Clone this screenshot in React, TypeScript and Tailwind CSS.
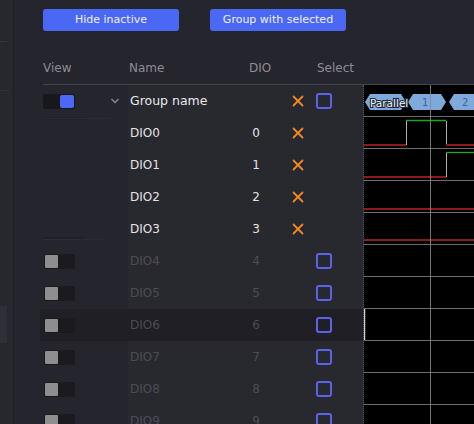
import React from "react";

type Row = { name: string; n: number; active: boolean };

const rows: Row[] = Array.from({ length: 10 }, (_, i) => ({
  name: `DIO${i}`,
  n: i,
  active: i < 4,
}));

function XIcon() {
  return (
    <svg width="12" height="12" viewBox="0 0 12 12" className="block">
      <path d="M1.5 1.5 L10.5 10.5 M10.5 1.5 L1.5 10.5" stroke="#f08a24" strokeWidth="1.8" strokeLinecap="round" />
    </svg>
  );
}

function Checkbox() {
  return <div className="h-[16px] w-[16px] shrink-0 rounded-[3px] border-2 border-[#5a63e6]" />;
}

function ToggleOn() {
  return (
    <div className="flex h-[15px] w-[32px] shrink-0 items-center justify-end rounded-[2px] bg-[#18181c] pr-[1px]">
      <div className="h-[13px] w-[14px] rounded-[2px] bg-[#4d68f6]" />
    </div>
  );
}

function ToggleOff() {
  return (
    <div className="flex h-[15px] w-[31px] shrink-0 items-center rounded-[2px] bg-[#1b1b1f]">
      <div className="h-[15px] w-[15px] shrink-0 rounded-[2px] border border-[#1a1a1e] bg-[#8e8e8e]" />
    </div>
  );
}

function Chevron() {
  return (
    <svg width="10" height="8" viewBox="0 0 10 8" className="block">
      <path d="M1.5 2 L5 5.5 L8.5 2" stroke="#8a8a92" strokeWidth="1.4" fill="none" />
    </svg>
  );
}

function GroupRow() {
  return (
    <div className="flex h-[32px] shrink-0 items-center">
      <div className="relative flex h-full w-[88px] items-center pl-[3px]">
        <ToggleOn />
        <div className="ml-[35px]">
          <Chevron />
        </div>
        <div className="absolute left-[3px] top-[32px] h-[3px] w-[44px] bg-[#202027]" />
        <div className="absolute left-[3px] top-[33px] h-px w-[68px] bg-[#2b2b33]" />
      </div>
      <div className="flex h-full flex-1 items-center bg-[#28282f]">
        <div className="w-[146px] pl-[2px] text-[12.5px] text-[#e8e8ea]">Group name</div>
        <div className="w-[42px] pl-[18px]">
          <XIcon />
        </div>
        <Checkbox />
      </div>
    </div>
  );
}

function DioRow({ r, highlight }: { r: Row; highlight: boolean }) {
  const color = r.active ? "text-[#e4e4e6]" : "text-[#4c4c56]";
  return (
    <div className={`flex h-[32px] shrink-0 items-center ${highlight ? "bg-[#1f1f25]" : ""}`}>
      <div className="relative flex h-full w-[88px] items-center pl-[4px]">
        {!r.active && <ToggleOff />}
        {r.n === 3 && (
          <>
            <div className="absolute left-[3px] top-[24px] h-[3px] w-[40px] bg-[#202027]" />
            <div className="absolute left-[3px] top-[26px] h-px w-[60px] bg-[#2b2b33]" />
          </>
        )}
      </div>
      <div className={`flex h-full flex-1 items-center ${highlight ? "bg-[#1f1f25]" : "bg-[#28282f]"}`}>
        <div className={`w-[110px] pl-[2px] text-[12px] ${color}`}>{r.name}</div>
        <div className={`w-[36px] text-center text-[12px] ${color}`}>{r.n}</div>
        <div className="w-[42px] pl-[18px]">{r.active && <XIcon />}</div>
        {!r.active && <Checkbox />}
      </div>
    </div>
  );
}

function Waveform() {
  const W = 111;
  const H = 352;
  const red = "#8e1b1b";
  const green = "#22a322";
  const trans = "#b0b0b0";
  const seps = Array.from({ length: 11 }, (_, k) => 32 * (k + 1) - 0.5);
  return (
    <svg width={W} height={H} viewBox={`0 0 ${W} ${H}`} className="block">
      <rect x="0" y="0" width={W} height={H} fill="#000" />
      {seps.map((y, i) => (
        <line key={i} x1="0" x2={W} y1={y} y2={y} stroke="#6c6c6c" strokeWidth="1" />
      ))}
      <polygon points="1,17 6,9 37,9 42,17 37,25 6,25" fill="#7eaadb" />
      <polygon points="44,17 49,9 77,9 82,17 77,25 49,25" fill="#7eaadb" />
      <polygon points="85,17 90,9 130,9 130,25 90,25" fill="#7eaadb" />
      <text x="6" y="21.5" fontSize="10.5" fontFamily="'DejaVu Sans', sans-serif" fill="#f4f4f4" stroke="#1d2a3a" strokeWidth="2.2" paintOrder="stroke">
        Parallel
      </text>
      <text x="58" y="21" fontSize="10" fontFamily="'DejaVu Sans', sans-serif" fill="#3f6291">1</text>
      <text x="98" y="21" fontSize="10" fontFamily="'DejaVu Sans', sans-serif" fill="#3f6291">2</text>
      <line x1="0" x2="42" y1="60" y2="60" stroke={red} strokeWidth="2" />
      <line x1="42.5" x2="42.5" y1="36" y2="60" stroke={trans} strokeWidth="1" />
      <line x1="42" x2="82" y1="35.5" y2="35.5" stroke={green} strokeWidth="1.3" />
      <line x1="82.5" x2="82.5" y1="36" y2="60" stroke={trans} strokeWidth="1" />
      <line x1="82" x2={W} y1="60" y2="60" stroke={red} strokeWidth="2" />
      <line x1="0" x2="82" y1="92" y2="92" stroke={red} strokeWidth="2" />
      <line x1="82.5" x2="82.5" y1="67" y2="92" stroke={trans} strokeWidth="1" />
      <line x1="82" x2={W} y1="67.5" y2="67.5" stroke={green} strokeWidth="1.3" />
      <line x1="0" x2={W} y1="124" y2="124" stroke={red} strokeWidth="2" />
      <line x1="0" x2={W} y1="155" y2="155" stroke={red} strokeWidth="2" />
      <line x1="66.5" x2="66.5" y1="0" y2={H} stroke="#8a8a8a" strokeWidth="1" opacity="0.85" />
      <line x1="0.5" x2="0.5" y1="224" y2="255" stroke="#d0d0d0" strokeWidth="1.5" />
    </svg>
  );
}

export default function App() {
  return (
    <div
      className="flex h-[424px] w-[474px] overflow-hidden bg-[#25252d]"
      style={{ fontFamily: "'DejaVu Sans', sans-serif" }}
    >
      <div className="relative h-full w-[14px] shrink-0 border-r border-[#1e1e24] bg-[#27272e]">
        <div className="absolute left-0 top-[41px] h-px w-[7px] bg-[#35353d]" />
        <div className="absolute left-0 top-[90px] h-px w-[9px] bg-[#303038]" />
        <div className="absolute left-0 top-[306px] h-[37px] w-[7px] bg-[#2f2f37]" />
      </div>
      <div className="flex min-h-0 flex-1 flex-col pl-[26px]">
        <div className="ml-[3px] flex shrink-0 gap-[31px] pt-[9px]">
          <div className="flex h-[22px] w-[136px] items-center justify-center rounded-[3px] bg-[#4b68f5] text-[11px] text-[#eef0ff]">
            Hide inactive
          </div>
          <div className="flex h-[22px] w-[136px] items-center justify-center rounded-[3px] bg-[#4b68f5] text-[11px] text-[#eef0ff]">
            Group with selected
          </div>
        </div>
        <div className="ml-[3px] mt-[24px] flex h-[30px] shrink-0 items-center border-b border-[#44444d] pb-[3px] text-[12px] text-[#8c8c96]">
          <div className="w-[86px]">View</div>
          <div className="w-[120px]">Name</div>
          <div className="w-[68px]">DIO</div>
          <div>Select</div>
        </div>
        <div className="flex shrink-0">
          <div className="w-[323px] shrink-0">
            <GroupRow />
            {rows.map((r) => (
              <DioRow key={r.name} r={r} highlight={r.n === 6} />
            ))}
          </div>
          <div className="flex-1 border-l border-dotted border-[#5a5a60]">
            <Waveform />
          </div>
        </div>
      </div>
    </div>
  );
}
